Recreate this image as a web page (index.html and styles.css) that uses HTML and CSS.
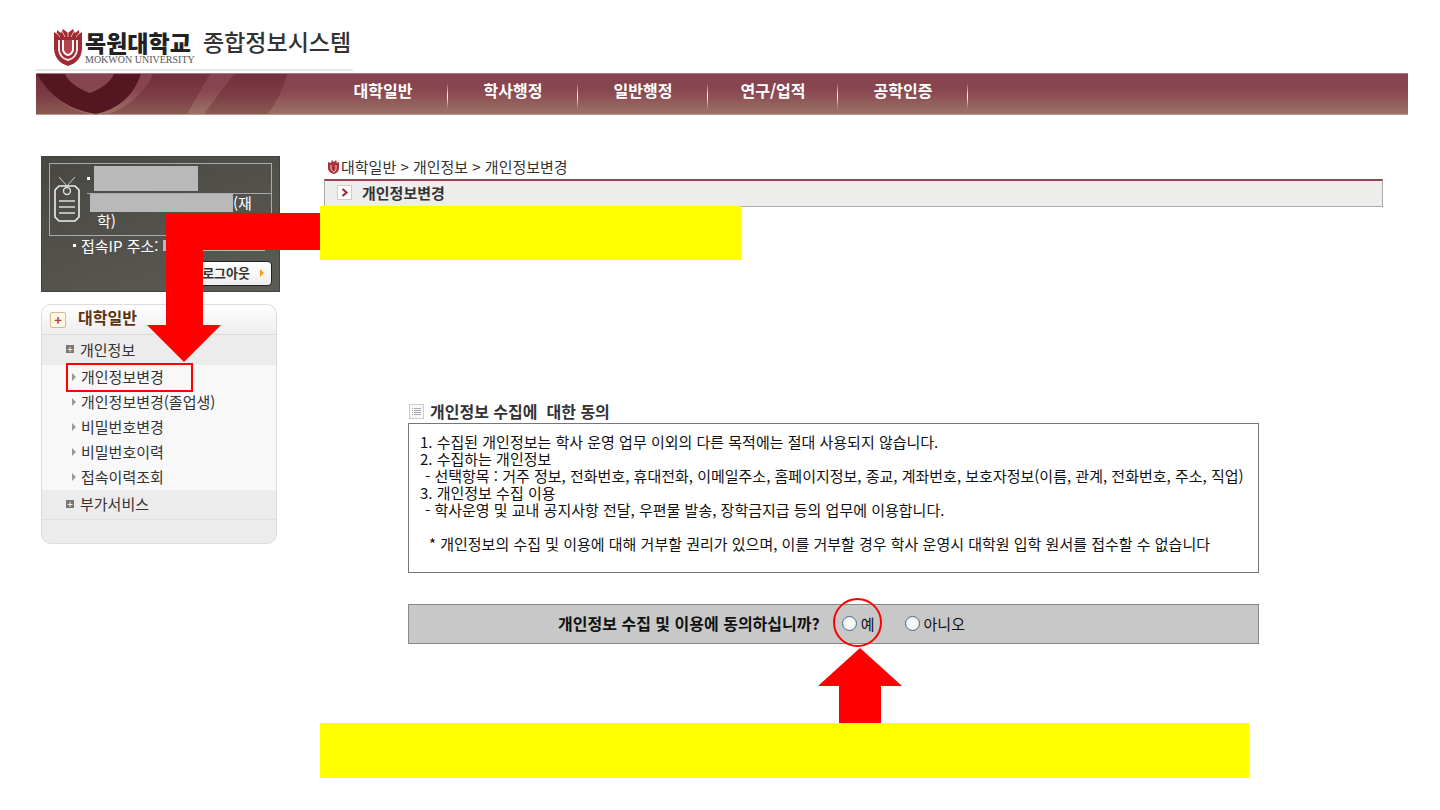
FILE: index.html
```html
<!DOCTYPE html>
<html lang="ko">
<head>
    <meta charset="UTF-8">
    <meta name="viewport" content="width=device-width, initial-scale=1.0">
    <title>목원대학교 종합정보시스템</title>
    <link rel="stylesheet" href="styles.css">
</head>
<body>
    <header class="header">
        <a class="brand" href="#">
            <svg class="brand-mark" viewBox="0 0 30 37" aria-hidden="true">
                <path d="M1 3L4 5L4 1L8 4L10 0L15 4L20 0L22 4L26 1L26 5L29 3V20Q28 33 15 37Q2 33 1 20Z" fill="#a02a33"/>
                <path d="M3 3l4 5M9 2l3 6M21 2l-3 6M27 3l-4 5M15 4v4" stroke="#e9b9b5" fill="none"/>
                <path d="M6 11v10q1 8 9 10q8-2 9-10V11" fill="none" stroke="#f4e4e2" stroke-width="2"/>
                <path d="M10 11v10q1 4 5 5q4-1 5-5V11" fill="#b64249" stroke="#fff" stroke-width="2"/>
            </svg>
            <span class="brand-name">
                <strong>목원대학교</strong>
                <small>MOKWON UNIVERSITY</small>
            </span>
            <span class="brand-system">종합정보시스템</span>
        </a>
        <nav class="top-nav">
            <svg class="nav-art" viewBox="0 0 282 42" preserveAspectRatio="none" aria-hidden="true">
                <defs>
                    <linearGradient id="band" x1="0" y1="0" x2="0" y2="1">
                        <stop offset="0" stop-color="#74303c"/>
                        <stop offset="0.5" stop-color="#7b3a44"/>
                        <stop offset="1" stop-color="#8b5a52"/>
                    </linearGradient>
                </defs>
                <path d="M0 0H2Q20 36 54 42H0Z" fill="url(#band)"/>
                <path d="M117 0H174L151 42H72Q104 30 117 0Z" fill="url(#band)"/>
                <path d="M198 0H251Q246 22 232 42H168Z" fill="url(#band)"/>
                <path d="M1 0H29Q34 12 54 20Q73 12 78 0H105Q94 34 60 42Q20 36 1 0Z" fill="#541620"/>
            </svg>
            <ul>
                <li><a href="#">대학일반</a></li>
                <li><a href="#">학사행정</a></li>
                <li><a href="#">일반행정</a></li>
                <li><a href="#">연구/업적</a></li>
                <li><a href="#">공학인증</a></li>
            </ul>
        </nav>
    </header>

    <div class="layout">
        <aside class="sidebar">
            <section class="user-card">
                <div class="user-frame">
                    <svg class="id-tag" viewBox="0 0 26 46" aria-hidden="true">
                        <path d="M5 1l8 9l8-9" fill="none" stroke="#ccc"/>
                        <path d="M5 10h16l4 4v27l-4 4H5l-4-4V14Z" fill="none" stroke="#eee" stroke-width="1.6"/>
                        <circle cx="13" cy="15" r="3.5" fill="#504f4a" stroke="#ddd" stroke-width="1.4"/>
                        <path d="M5 25h16M5 31h16M5 37h16" stroke="#ddd" stroke-width="1.3"/>
                    </svg>
                    <ul class="user-info">
                        <li><span class="mask mask-name"></span></li>
                        <li><span class="mask mask-dept"></span>(재<br><span class="status">학)</span></li>
                    </ul>
                </div>
                <p class="user-ip">접속IP 주소:<span class="mask mask-ip"></span></p>
                <button class="logout" type="button">로그아웃
                    <svg viewBox="0 0 4 8" aria-hidden="true"><path d="M0 0l4 4l-4 4Z" fill="#f0a020"/></svg>
                </button>
            </section>

            <nav class="menu">
                <h2><span class="plus-icon">+</span>대학일반</h2>
                <a class="menu-group" href="#">개인정보</a>
                <ul>
                    <li class="current"><a href="#">개인정보변경</a></li>
                    <li><a href="#">개인정보변경(졸업생)</a></li>
                    <li><a href="#">비밀번호변경</a></li>
                    <li><a href="#">비밀번호이력</a></li>
                    <li><a href="#">접속이력조회</a></li>
                </ul>
                <a class="menu-group" href="#">부가서비스</a>
            </nav>

            <!-- arrow from the first note to the menu item -->
            <svg class="arrow-menu" viewBox="0 0 173 149" aria-hidden="true">
                <path d="M19 0H173V37H56V112H74L37 149L0 112H19Z" fill="#f00"/>
            </svg>
        </aside>

        <main class="content">
            <div class="breadcrumb">
                <svg viewBox="0 0 11 14" aria-hidden="true">
                    <path d="M0 2l3 1l1-3l2 2l2-2l1 3l2-1v7q-1 4-5 5q-5-1-6-5Z" fill="#a5323b"/>
                    <path d="M3 5v4q1 2 3 3q2-1 2-3V5" fill="none" stroke="#f0d0d0"/>
                </svg>
                대학일반 &gt; 개인정보 &gt; 개인정보변경
            </div>
            <div class="title-wrap">
                <h1>
                    <svg viewBox="0 0 15 15" aria-hidden="true">
                        <rect x="0.5" y="0.5" width="14" height="14" fill="#fff" stroke="#ccc"/>
                        <path d="M5.5 4l4 3.5l-4 3.5" fill="none" stroke="#a5283b" stroke-width="2.2"/>
                    </svg>
                    개인정보변경
                </h1>
                <div class="note note-menu"></div>
            </div>

            <form class="consent">
                <h2>
                    <svg viewBox="0 0 15 15" aria-hidden="true">
                        <rect x="0.5" y="0.5" width="14" height="14" fill="#f8f8f8" stroke="#ccc"/>
                        <path d="M3 4.5h1M5 4.5h7M3 6.5h1M5 6.5h7M3 8.5h1M5 8.5h7M3 10.5h1M5 10.5h7" stroke="#aaa"/>
                    </svg>
                    개인정보 수집에&nbsp; 대한 동의
                </h2>
                <div class="terms">
                    <p>1. 수집된 개인정보는 학사 운영 업무 이외의 다른 목적에는 절대 사용되지 않습니다.</p>
                    <p>2. 수집하는 개인정보</p>
                    <p class="sub">- 선택항목 : 거주 정보, 전화번호, 휴대전화, 이메일주소, 홈페이지정보, 종교, 계좌번호, 보호자정보(이름, 관계, 전화번호, 주소, 직업)</p>
                    <p>3. 개인정보 수집 이용</p>
                    <p class="sub">- 학사운영 및 교내 공지사항 전달, 우편물 발송, 장학금지급 등의 업무에 이용합니다.</p>
                    <p class="remark">* 개인정보의 수집 및 이용에 대해 거부할 권리가 있으며, 이를 거부할 경우 학사 운영시 대학원 입학 원서를 접수할 수 없습니다</p>
                </div>
                <div class="agree" role="radiogroup" aria-labelledby="agree-question">
                    <strong id="agree-question">개인정보 수집 및 이용에 동의하십니까?</strong>
                    <label class="yes">
                        <input type="radio" name="agree" value="y">예
                        <svg class="arrow-yes" viewBox="0 0 84 76" aria-hidden="true">
                            <path d="M42 0L84 38H63V76H21V38H0Z" fill="#f00"/>
                        </svg>
                    </label>
                    <label><input type="radio" name="agree" value="n">아니오</label>
                </div>
            </form>
            <div class="note note-agree"></div>
        </main>
    </div>
</body>
</html>
```
FILE: styles.css
```css
* {
    margin: 0;
    padding: 0;
    box-sizing: border-box;
}

body {
    font-family: "Noto Sans CJK KR", sans-serif;
    font-size: 15px;
    line-height: 17px;
    color: #333;
    background: #fff;
}

a {
    color: inherit;
    text-decoration: none;
}

ul {
    list-style: none;
}

/* header */
.header {
    padding: 0 32px 0 36px;
}

.brand {
    display: flex;
    align-items: center;
    width: 317px;
    height: 71px;
    padding: 25px 0 0 17px;
    border-bottom: 2px solid #e8e8e6;
    margin-bottom: 2px;
    white-space: nowrap;
}

.brand-mark {
    width: 30px;
    height: 37px;
    margin-right: 2px;
}

.brand-name {
    width: 106px;
    margin-right: 12px;
}

.brand-name strong {
    display: block;
    font-size: 23px;
    font-weight: 900;
    line-height: 26px;
    color: #222;
}

.brand-name small {
    display: block;
    font-family: "Liberation Serif", serif;
    font-size: 10px;
    line-height: 10px;
    color: #555;
}

.brand-system {
    font-size: 23px;
    font-weight: 500;
    line-height: 24px;
    margin-bottom: 12px;
}

.top-nav {
    display: flex;
    height: 42px;
    background: linear-gradient(#86434f 0%, #884650 40%, #9c7264 100%);
    border-top: 1px solid #a87880;
    border-bottom: 1px solid #b89890;
}

.nav-art {
    width: 282px;
    height: 40px;
}

.top-nav ul {
    display: flex;
}

.top-nav li {
    width: 130px;
    padding-top: 8px;
    text-align: center;
    background: linear-gradient(transparent, #fff, transparent) right 9px / 1px 26px no-repeat;
}

.top-nav a {
    font-size: 16px;
    font-weight: bold;
    color: #fff;
}

/* layout */
.layout {
    display: flex;
    padding: 41px 57px 0 41px;
}

.sidebar {
    position: relative;
    flex: none;
    width: 239px;
    margin-right: 40px;
}

/* user card */
.user-card {
    height: 136px;
    padding: 6px 7px;
    color: #fff;
    background: linear-gradient(160deg, #484742, #5c5b56);
    border: 1px solid #44433e;
}

.user-frame {
    display: flex;
    height: 73px;
    border: 1px solid #aaa;
}

.id-tag {
    flex: none;
    width: 26px;
    height: 46px;
    margin: 12px 7px 0 4px;
}

.user-info {
    flex: 1;
}

.user-info li {
    display: flex;
    align-items: center;
    height: 29px;
}

.user-info li + li {
    display: block;
    height: 42px;
    padding-left: 3px;
    border-top: 1px solid #aaa;
}

.user-info li:first-child::before,
.user-ip::before {
    content: "";
    width: 3px;
    height: 3px;
    background: #fff;
}

.mask {
    display: inline-block;
    background: #b9b9b9;
}

.mask-name {
    width: 104px;
    height: 25px;
    margin-left: 4px;
}

.mask-dept {
    width: 143px;
    height: 18px;
    vertical-align: top;
}

.status {
    margin-left: 7px;
}

.user-ip {
    display: flex;
    align-items: center;
    gap: 5px;
    margin: 1px 7px 7px 24px;
    white-space: nowrap;
}

.mask-ip {
    flex: 1;
    height: 11px;
}

.logout {
    display: flex;
    align-items: center;
    justify-content: flex-end;
    gap: 10px;
    width: 90px;
    height: 25px;
    margin-left: auto;
    padding: 0 7px 2px 0;
    font: bold 13px "Noto Sans CJK KR", sans-serif;
    color: #333;
    background: linear-gradient(#fff, #eee);
    border: 1px solid #222;
    border-radius: 4px;
}

.logout svg {
    width: 4px;
    height: 8px;
}

/* side menu */
.menu {
    width: 236px;
    margin-top: 12px;
    padding-bottom: 23px;
    background: #ececec;
    border: 1px solid #ddd;
    border-radius: 10px;
    overflow: hidden;
}

.menu h2 {
    display: flex;
    align-items: center;
    height: 30px;
    padding: 0 0 4px 8px;
    font-size: 16px;
    color: #5c3310;
    background: linear-gradient(#fff, #eee);
    border-bottom: 1px solid #ddd;
}

.plus-icon {
    width: 16px;
    height: 16px;
    margin: 4px 12px 0 0;
    font-size: 13px;
    line-height: 13px;
    text-align: center;
    color: #b84030;
    background: #fff8e8;
    border: 1px solid #d8b888;
    border-radius: 2px;
}

.menu-group {
    display: flex;
    align-items: center;
    height: 30px;
    padding: 0 0 2px 24px;
}

.menu-group::before {
    content: "+";
    width: 8px;
    height: 8px;
    margin-right: 6px;
    font-size: 10px;
    line-height: 7px;
    text-align: center;
    color: #fff;
    background: #777;
}

.menu ul {
    background: #f8f8f8;
}

.menu ul + .menu-group {
    border-bottom: 1px solid #e0e0e0;
}

.menu li {
    display: flex;
    align-items: center;
    height: 25px;
    padding-left: 24px;
}

.menu li a {
    display: flex;
    align-items: center;
    height: 29px;
    padding: 0 0 2px 6px;
}

.menu li a::before {
    content: "";
    margin-right: 5px;
    border: 4px solid transparent;
    border-left-color: #999;
    border-right-width: 0;
}

.menu li.current a {
    width: 127px;
    outline: 2px solid #f00;
    outline-offset: -2px;
}

/* main column */
.content {
    flex: 1;
    min-width: 0;
    padding-left: 4px;
}

.breadcrumb {
    display: flex;
    align-items: center;
    gap: 2px;
    height: 23px;
    padding-bottom: 2px;
}

.breadcrumb svg {
    width: 11px;
    height: 14px;
    margin-left: 4px;
}

.title-wrap {
    position: relative;
}

h1 {
    display: flex;
    align-items: center;
    gap: 10px;
    height: 28px;
    padding: 0 0 3px 12px;
    font-size: 15px;
    background: #ededeb;
    border: 1px solid #aaa;
    border-top: 2px solid #984450;
}

h1 svg,
.consent h2 svg {
    width: 15px;
    height: 15px;
}

.note {
    background: #ff0;
}

.note-menu {
    position: absolute;
    top: 27px;
    left: -4px;
    width: 421px;
    height: 54px;
}

.consent {
    margin: 194px 124px 0 84px;
}

.consent h2 {
    display: flex;
    align-items: center;
    gap: 6px;
    height: 22px;
    padding: 0 0 2px 1px;
    font-size: 16px;
}

.terms {
    height: 150px;
    padding: 9px 11px;
    color: #111;
    border: 1px solid #777;
}

.terms .sub {
    padding-left: 5px;
    white-space: nowrap;
}

.terms .remark {
    padding: 17px 0 0 9px;
    white-space: nowrap;
}

.agree {
    display: flex;
    align-items: center;
    justify-content: center;
    height: 40px;
    margin-top: 31px;
    padding: 0 144px 2px 0;
    color: #111;
    background: #c8c8c8;
    border: 1px solid #888;
}

.agree strong {
    margin-right: 22px;
    font-size: 16px;
}

.agree label {
    display: flex;
    align-items: center;
    gap: 4px;
}

.agree input {
    appearance: none;
    width: 15px;
    height: 15px;
    background: radial-gradient(#fff, #e8e8e8);
    border: 1px solid #4c6e90;
    border-radius: 50%;
}

.agree input:checked {
    background: radial-gradient(#3a9a3a 30%, #fff 35%);
}

.agree .yes {
    position: relative;
    margin-right: 30px;
}

/* ring round the "yes" choice */
.yes::before {
    content: "";
    position: absolute;
    top: 50%;
    left: 50%;
    width: 45px;
    height: 45px;
    margin: -25px 0 0 -25px;
    border: 2px solid #f00;
    border-radius: 50%;
}

.arrow-yes {
    position: absolute;
    top: 33px;
    left: 50%;
    width: 84px;
    height: 76px;
    margin-left: -40px;
}

.arrow-menu {
    position: absolute;
    top: 57px;
    left: 106px;
    width: 173px;
    height: 149px;
}

.note-agree {
    position: relative;
    height: 55px;
    margin: 79px 134px 32px -4px;
}
```
